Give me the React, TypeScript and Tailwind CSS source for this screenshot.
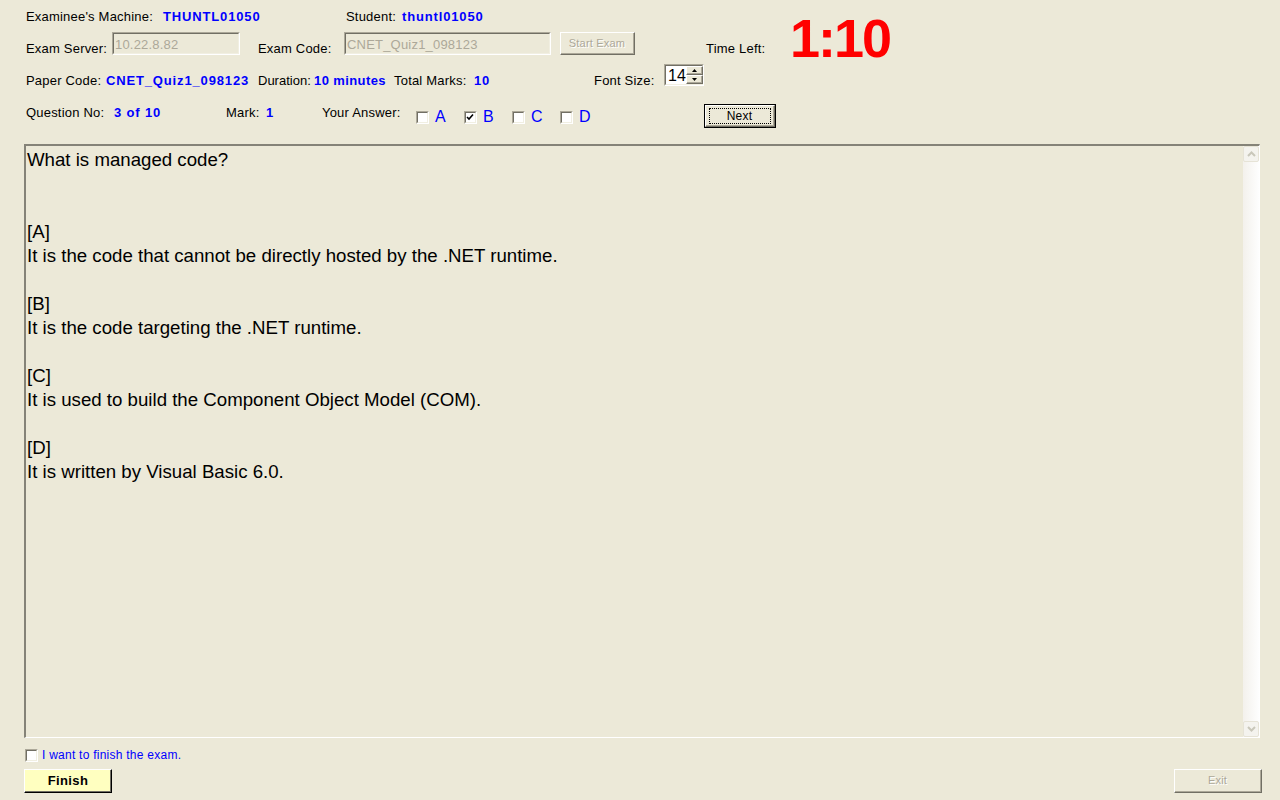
import React from 'react';

const FONT = { fontFamily: '"Liberation Sans", Arial, sans-serif' };

const Check: React.FC<{ checked?: boolean }> = ({ checked }) => (
  <span className="relative inline-block h-[13px] w-[13px] border-t border-l border-t-[#aca899] border-l-[#aca899] border-b border-r border-b-white border-r-white bg-white">
    <span className="absolute inset-0 border-t border-l border-t-[#716f64] border-l-[#716f64] border-b border-r border-b-[#f1efe2] border-r-[#f1efe2]" />
    {checked && (
      <svg className="absolute left-[1px] top-[1px]" width="9" height="9" viewBox="0 0 9 9">
        <path d="M1 4 L3 6 L7 1.5" stroke="#000" strokeWidth="1.6" fill="none" />
      </svg>
    )}
  </span>
);

const Sunken: React.FC<{ className?: string; children?: React.ReactNode }> = ({ className, children }) => (
  <div className={`border-t border-l border-t-[#aca899] border-l-[#aca899] border-b border-r border-b-white border-r-white ${className || ''}`}>
    <div className="h-full w-full border-t border-l border-t-[#716f64] border-l-[#716f64] border-b border-r border-b-[#f1efe2] border-r-[#f1efe2]">
      {children}
    </div>
  </div>
);

const Raised: React.FC<{ className?: string; inner?: string; children?: React.ReactNode }> = ({ className, inner, children }) => (
  <div className={`border-t border-l border-t-white border-l-white border-b border-r border-b-[#716f64] border-r-[#716f64] ${className || ''}`}>
    <div className={`flex h-full w-full items-center justify-center border-b border-r border-b-[#aca899] border-r-[#aca899] ${inner || ''}`}>
      {children}
    </div>
  </div>
);

const options = [
  { key: 'A', text: 'It is the code that cannot be directly hosted by the .NET runtime.' },
  { key: 'B', text: 'It is the code targeting the .NET runtime.' },
  { key: 'C', text: 'It is used to build the Component Object Model (COM).' },
  { key: 'D', text: 'It is written by Visual Basic 6.0.' },
];

// bold blue value text
const val = 'font-bold tracking-[0.85px] text-[#0000ff]';

export default function App() {
  return (
    <div className="h-[800px] w-[1280px] overflow-hidden bg-[#ece9d8] text-[13px] leading-[15px] tracking-[0.2px] text-black" style={FONT}>
      {/* row 1 */}
      <div className="flex h-[32px] items-center pl-[26px]">
        <span className="w-[137px]">Examinee's Machine:</span>
        <span className={`w-[183px] ${val}`}>THUNTL01050</span>
        <span className="w-[56px]">Student:</span>
        <span className={val}>thuntl01050</span>
      </div>

      {/* row 2 */}
      <div className="flex h-[24px] items-start pl-[26px]">
        <span className="mt-[9px] w-[86px]">Exam Server:</span>
        <Sunken className="h-[23px] w-[128px]">
          <div className="pl-[1px] pt-[3px] text-[#aca899]">10.22.8.82</div>
        </Sunken>
        <span className="ml-[18px] mt-[9px] w-[86px]">Exam Code:</span>
        <Sunken className="h-[23px] w-[207px]">
          <div className="pl-[1px] pt-[3px] text-[#aca899]">CNET_Quiz1_098123</div>
        </Sunken>
        <Raised className="ml-[9px] h-[23px] w-[75px]">
          <span className="text-[11px] text-[#aca899] [text-shadow:1px_1px_0_#fff]">Start Exam</span>
        </Raised>
        <span className="ml-[71px] mt-[9px] w-[84px]">Time Left:</span>
        <span className="-mt-[21px] text-[54px] font-bold leading-[54px] tracking-[-2px] text-[#ff0000]">1:10</span>
      </div>

      {/* row 3 */}
      <div className="mt-[8px] flex h-[23px] items-start pl-[26px]">
        <span className="mt-[9px] w-[80px]">Paper Code:</span>
        <span className={`mt-[9px] w-[152px] ${val}`}>CNET_Quiz1_098123</span>
        <span className="mt-[9px] w-[56px] tracking-normal">Duration:</span>
        <span className="mt-[9px] w-[80px] font-bold tracking-[0.4px] text-[#0000ff]">10 minutes</span>
        <span className="mt-[9px] w-[80px]">Total Marks:</span>
        <span className={`mt-[9px] w-[120px] ${val}`}>10</span>
        <span className="mt-[9px] w-[70px]">Font Size:</span>
        <Sunken className="h-[22px] w-[40px]">
          <div className="flex h-full bg-white">
            <span className="pl-[2px] pt-[1px] text-[16px] leading-[18px]">14</span>
            <div className="ml-auto flex w-[17px] flex-col bg-[#ece9d8]">
              <Raised className="h-[10px] w-[17px]">
                <svg width="5" height="3" viewBox="0 0 5 3"><path d="M2.5 0 L5 3 L0 3 Z" fill="#000" /></svg>
              </Raised>
              <Raised className="h-[10px] w-[17px]">
                <svg width="5" height="3" viewBox="0 0 5 3"><path d="M0 0 L5 0 L2.5 3 Z" fill="#000" /></svg>
              </Raised>
            </div>
          </div>
        </Sunken>
      </div>

      {/* row 4 */}
      <div className="mt-[17px] flex h-[24px] items-start pl-[26px]">
        <span className="mt-[1px] w-[88px]">Question No:</span>
        <span className={`mt-[1px] w-[112px] ${val}`}>3 of 10</span>
        <span className="mt-[1px] w-[40px]">Mark:</span>
        <span className={`mt-[1px] w-[56px] ${val}`}>1</span>
        <span className="mt-[1px] w-[94px]">Your Answer:</span>
        {['A', 'B', 'C', 'D'].map(k => (
          <span key={k} className="mt-[5px] flex w-[48px] items-center gap-[6px]">
            <Check checked={k === 'B'} />
            <span className="text-[16px] leading-[16px] text-[#0000ff]">{k}</span>
          </span>
        ))}
        <div className="ml-[96px] h-[24px] w-[72px] border border-black">
          <Raised className="h-full w-full">
            <span className="flex h-[16px] w-[62px] items-center justify-center border border-dotted border-black pt-[1px] text-[12px]">Next</span>
          </Raised>
        </div>
      </div>

      {/* question box */}
      <div className="ml-[24px] mt-[16px] flex h-[594px] w-[1236px] border-t-2 border-l-2 border-t-[#858378] border-l-[#858378] border-b border-r border-b-white border-r-white">
        <div className="flex-1 pl-[1px] pt-[2px] text-[18.67px] leading-[24px] tracking-normal">
          <div>What is managed code?</div>
          <div className="h-[48px]" />
          {options.map(o => (
            <div key={o.key} className="mb-[24px]">
              <div>[{o.key}]</div>
              <div>{o.text}</div>
            </div>
          ))}
        </div>
        <div className="flex w-[16px] flex-col bg-gradient-to-r from-[#f3f1ec] to-[#fefefe]">
          <div className="flex h-[16px] items-center justify-center rounded-[2px] border border-[#e6e3d6] bg-[#f4f3ee]">
            <svg width="9" height="6" viewBox="0 0 9 6"><path d="M1 5 L4.5 1.5 L8 5" stroke="#c9c7ba" strokeWidth="2" fill="none" /></svg>
          </div>
          <div className="flex-1" />
          <div className="flex h-[16px] items-center justify-center rounded-[2px] border border-[#e6e3d6] bg-[#f4f3ee]">
            <svg width="9" height="6" viewBox="0 0 9 6"><path d="M1 1 L4.5 4.5 L8 1" stroke="#c9c7ba" strokeWidth="2" fill="none" /></svg>
          </div>
        </div>
      </div>

      {/* bottom */}
      <div className="ml-[25px] mt-[10px] flex items-center gap-[4px]">
        <Check />
        <span className="text-[12px] tracking-[0.25px] text-[#0000ff]">I want to finish the exam.</span>
      </div>
      <div className="mt-[6px] flex justify-between pl-[24px] pr-[18px]">
        <div className="h-[24px] w-[88px] border-t border-l border-t-white border-l-white border-b border-r border-b-black border-r-black">
          <div className="flex h-full w-full items-center justify-center border-b border-r border-b-[#716f64] border-r-[#716f64] bg-[#ffffc0] pl-[1px] text-[13px] font-bold tracking-[0.4px]">
            Finish
          </div>
        </div>
        <Raised className="h-[24px] w-[88px]">
          <span className="text-[11px] text-[#aca899] [text-shadow:1px_1px_0_#fff]">Exit</span>
        </Raised>
      </div>
    </div>
  );
}
